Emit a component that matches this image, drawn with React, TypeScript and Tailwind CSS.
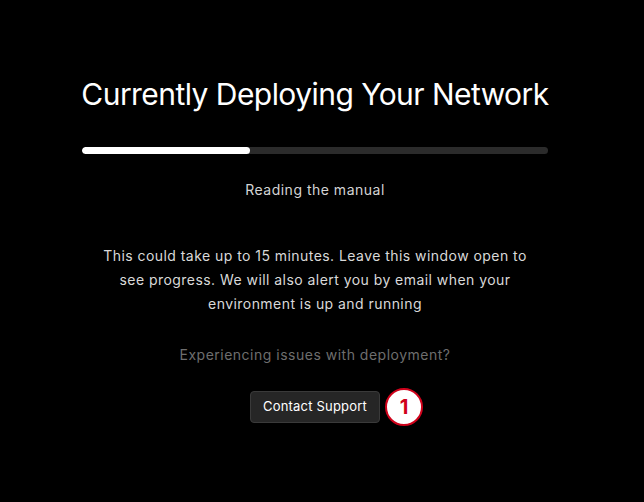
import React from "react";

export default function App() {
  return (
    <div className="w-[644px] h-[502px] bg-black overflow-hidden" style={{ fontFamily: "Inter, 'Noto Sans', sans-serif" }}>
      <div className="ml-[82px] w-[466px] pt-[76px] flex flex-col items-center">
        <h1 className="text-[30px] leading-[36px] text-white font-normal tracking-[-0.55px] whitespace-nowrap">Currently Deploying Your Network</h1>
        <div className="mt-[35px] w-full h-[7px] rounded-full bg-[#2b2b2b] overflow-hidden">
          <div className="h-full bg-white rounded-full" style={{ width: "36%" }} />
        </div>
        <p className="mt-[26px] text-[14px] leading-[20px] tracking-[0.5px] text-[#d4d4d4]">Reading the manual</p>
        <p className="mt-[44px] text-center text-[14px] leading-[24px] tracking-[0.45px] text-[#d9d9d9] whitespace-nowrap">
          This could take up to 15 minutes. Leave this window open to
          <br />
          see progress. We will also alert you by email when your
          <br />
          environment is up and running
        </p>
        <p className="mt-[29px] text-[14px] leading-[20px] tracking-[0.5px] text-[#6e6e6e]">Experiencing issues with deployment?</p>
        <div className="mt-[26px] relative">
          <button className="h-[32px] px-[12px] rounded-[4px] bg-[#262626] border border-[#3a3a3a] text-white text-[13px] tracking-[0.2px]">Contact Support</button>
          <div className="absolute left-[135px] top-[-3px] w-[38px] h-[38px] rounded-full bg-white border-[2px] border-[#d0021b] flex items-center justify-center text-[#d0021b] text-[20px] font-bold">1</div>
        </div>
      </div>
    </div>
  );
}
